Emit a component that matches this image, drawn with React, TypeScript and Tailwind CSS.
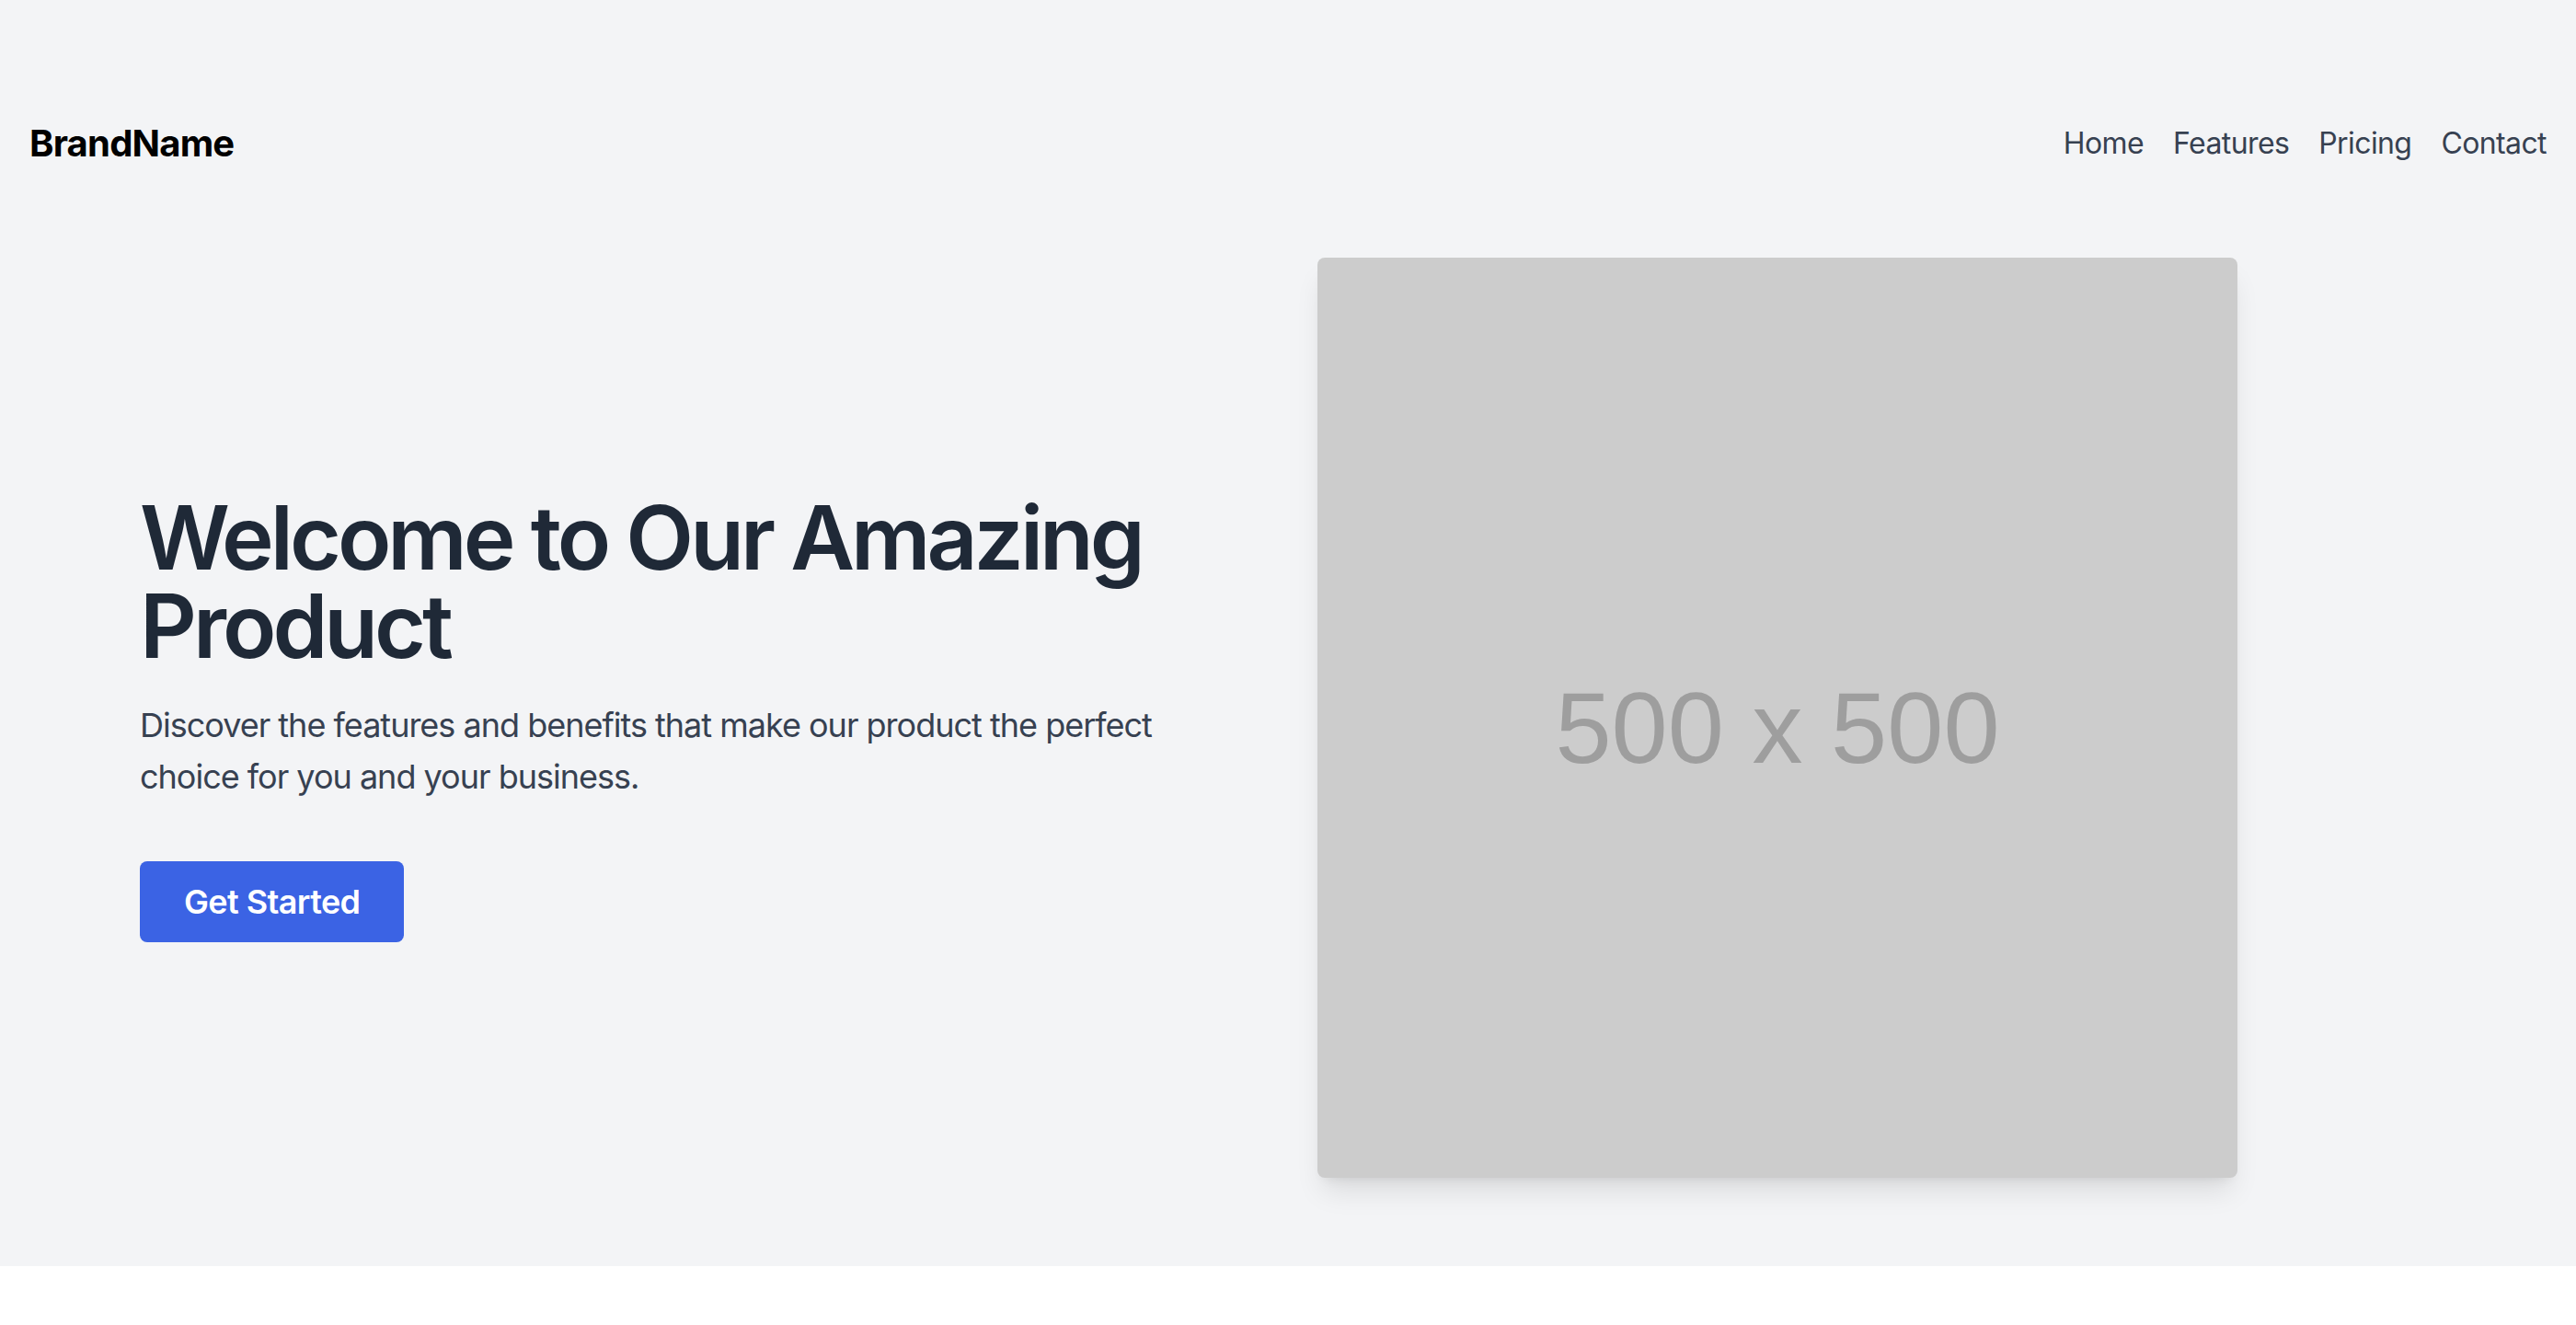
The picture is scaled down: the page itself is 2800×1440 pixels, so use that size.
export default function App() {
  const links = ["Home", "Features", "Pricing", "Contact"];

  return (
    <div className="bg-[#f3f4f6] font-['Inter',sans-serif]">
      <header className="flex items-center justify-between px-8 pt-32">
        <div className="text-[40px] leading-[56px] font-bold text-black tracking-[-0.8px]">BrandName</div>
        <nav className="flex gap-8">
          {links.map((l) => (
            <a key={l} href="#" className="text-[32px] leading-[56px] text-[#374151] tracking-[-0.6px]">
              {l}
            </a>
          ))}
        </nav>
      </header>

      <section className="max-w-[2560px] mx-auto px-8 py-24">
        <div className="grid grid-cols-2 gap-16 items-center">
          <div>
            <h1 className="text-[96px] leading-none font-semibold text-[#1f2937] mb-8 tracking-[-4px]">
              Welcome to Our Amazing Product
            </h1>
            <p className="text-[36px] leading-[56px] text-[#374151] mb-16 tracking-[-1px]">
              Discover the features and benefits that make our product the perfect choice for you and your business.
            </p>
            <button className="bg-[#3b63e4] text-white text-[36px] leading-[56px] font-semibold px-12 py-4 rounded-lg tracking-[-0.6px]">
              Get Started
            </button>
          </div>
          <div>
            <div className="w-[1000px] h-[1000px] bg-[#cccccc] rounded-lg shadow-[0_20px_30px_-6px_rgba(0,0,0,0.1),0_8px_12px_-8px_rgba(0,0,0,0.1)] flex items-center justify-center">
              <span className="font-['Liberation_Sans',Arial,sans-serif] text-[110px] text-[#9e9e9e] mt-[20px]">
                500 x 500
              </span>
            </div>
          </div>
        </div>
      </section>
    </div>
  );
}
